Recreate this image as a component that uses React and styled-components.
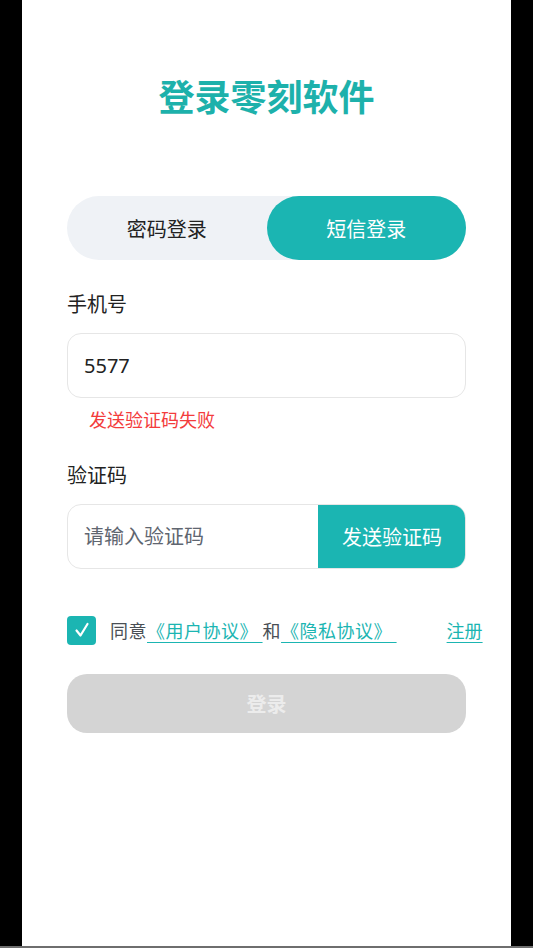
import React, { useState } from "react";
import styled, { createGlobalStyle } from "styled-components";

const TEAL = "#1bb5b2";

const GlobalStyle = createGlobalStyle`
  html, body {
    margin: 0;
    padding: 0;
    background: #000;
  }
  body {
    font-family: "Noto Sans CJK SC", "Noto Sans", sans-serif;
  }
  * {
    box-sizing: border-box;
  }
`;

const App = () => {
  const [mode, setMode] = useState("sms");
  const [phone, setPhone] = useState("5577");
  const [code, setCode] = useState("");
  const [agreed, setAgreed] = useState(true);

  return (
    <Screen>
      <GlobalStyle />
      <Stage>
        <Panel>
          <Title>登录零刻软件</Title>

          <Tabs>
            <Tab $active={mode === "password"} onClick={() => setMode("password")}>
              密码登录
            </Tab>
            <Tab $active={mode === "sms"} onClick={() => setMode("sms")}>
              短信登录
            </Tab>
          </Tabs>

          <Label>手机号</Label>
          <InputBox>
            <StyledInput
              type="tel"
              value={phone}
              onChange={(e) => {
                setPhone(e.target.value);
              }}
            />
          </InputBox>
          <ErrorText>发送验证码失败</ErrorText>

          <Label>验证码</Label>
          <InputBox>
            <StyledInput
              type="text"
              placeholder="请输入验证码"
              value={code}
              onChange={(e) => {
                setCode(e.target.value);
              }}
            />
            <SendButton>发送验证码</SendButton>
          </InputBox>

          <AgreementRow>
            <CheckBox $checked={agreed} onClick={() => setAgreed(!agreed)}>
              {agreed && (
                <svg width="18" height="18" viewBox="0 0 18 18">
                  <polyline
                    points="3.5,9.5 7.5,14.5 14.5,3"
                    fill="none"
                    stroke="#fff"
                    strokeWidth="2.2"
                    strokeLinecap="round"
                    strokeLinejoin="round"
                  />
                </svg>
              )}
            </CheckBox>
            <AgreementText>
              同意<LinkText>《用户协议》 </LinkText>和<LinkText>《隐私协议》 </LinkText>
            </AgreementText>
            <RegisterLink>注册</RegisterLink>
          </AgreementRow>

          <LoginButton disabled>登录</LoginButton>
        </Panel>
      </Stage>
      <BottomLine />
    </Screen>
  );
};

const Screen = styled.div`
  height: 948px;
  display: flex;
  flex-direction: column;
  overflow: hidden;
`;

const Stage = styled.div`
  flex: 1;
  display: flex;
  padding-left: 22px;
`;

const Panel = styled.div`
  width: 489px;
  background: #fff;
  padding: 74px 45px 0;
  display: flex;
  flex-direction: column;
`;

const BottomLine = styled.div`
  height: 2px;
  background: #6e6e6e;
`;

const Title = styled.h1`
  margin: 0;
  text-align: center;
  font-size: 36px;
  line-height: 43px;
  font-weight: 700;
  color: #1db1ab;
`;

const Tabs = styled.div`
  margin-top: 79px;
  height: 64px;
  display: grid;
  grid-template-columns: 1fr 1fr;
  background: #eff2f6;
  border-radius: 32px;
`;

const Tab = styled.button`
  border: none;
  outline: none;
  padding: 0;
  border-radius: 32px;
  font-family: inherit;
  font-size: 20px;
  background: ${(p) => (p.$active ? TEAL : "transparent")};
  color: ${(p) => (p.$active ? "#fff" : "#222")};
  cursor: pointer;
`;

const Label = styled.div`
  margin-top: 30px;
  font-size: 20px;
  line-height: 28px;
  color: #222;
`;

const InputBox = styled.div`
  margin-top: 15px;
  height: 65px;
  display: flex;
  border: 1px solid #e6e6e6;
  border-radius: 14px;
  overflow: hidden;
  background: #fff;
`;

const StyledInput = styled.input`
  flex: 1;
  min-width: 0;
  border: none;
  outline: none;
  padding: 0 16px;
  font-family: "Noto Sans", "Noto Sans CJK SC", sans-serif;
  font-size: 20px;
  color: #222;
  background: transparent;

  &::placeholder {
    font-family: "Noto Sans CJK SC", sans-serif;
    color: #5f6670;
  }
`;

const SendButton = styled.button`
  width: 148px;
  border: none;
  outline: none;
  margin: -1px -1px -1px 0;
  background: ${TEAL};
  color: #fff;
  font-family: inherit;
  font-size: 20px;
  border-radius: 0 14px 14px 0;
`;

const ErrorText = styled.div`
  margin-top: 9px;
  padding-left: 22px;
  font-size: 18px;
  line-height: 24px;
  color: #f33c3c;
`;

const AgreementRow = styled.div`
  margin-top: 46px;
  height: 30px;
  display: flex;
  align-items: center;
  white-space: nowrap;
`;

const CheckBox = styled.div`
  flex-shrink: 0;
  width: 29px;
  height: 29px;
  border-radius: 4px;
  background: ${(p) => (p.$checked ? TEAL : "#fff")};
  border: ${(p) => (p.$checked ? "none" : "1px solid #ccc")};
  display: flex;
  align-items: center;
  justify-content: center;
  cursor: pointer;
`;

const AgreementText = styled.div`
  flex-shrink: 0;
  margin-left: 14px;
  font-size: 18px;
  letter-spacing: 0.5px;
  color: #4a4f55;
  white-space: pre;
`;

const LinkText = styled.span`
  color: ${TEAL};
  text-decoration: underline;
  text-underline-offset: 4px;
`;

const RegisterLink = styled(LinkText)`
  flex-shrink: 0;
  margin-left: 50px;
  font-size: 18px;
`;

const LoginButton = styled.button`
  margin-top: 29px;
  height: 59px;
  width: 100%;
  border: none;
  border-radius: 20px;
  background: #d4d4d4;
  color: #ececec;
  font-family: inherit;
  font-size: 20px;
  font-weight: 700;
`;

export default App;
